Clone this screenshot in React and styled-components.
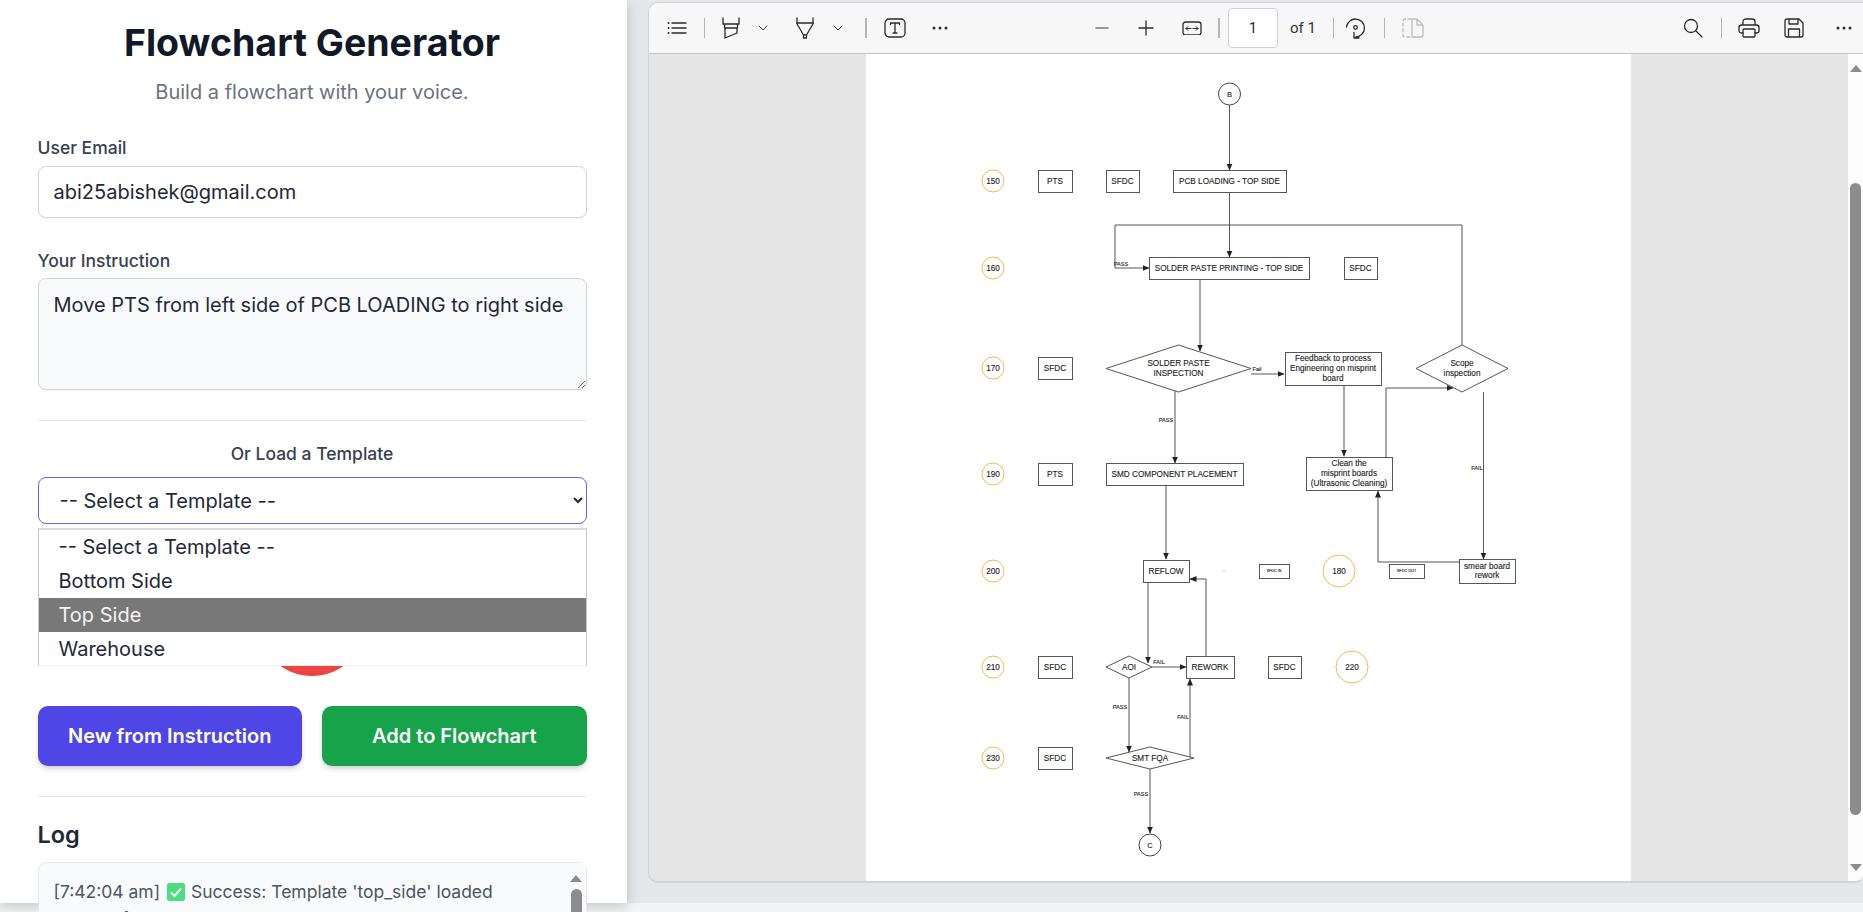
import React from 'react';
import styled, { createGlobalStyle } from 'styled-components';

const GlobalStyle = createGlobalStyle`
  html, body {
    margin: 0;
    height: 100%;
    overflow: hidden;
    background: #f3f4f6;
  }

  * {
    box-sizing: border-box;
  }
`;

const Page = styled.div`
  display: flex;
  align-items: flex-start;
  width: 1863px;
  height: 912px;
  overflow: hidden;
  font-family: Inter, 'Liberation Sans', sans-serif;
`;

const Sidebar = styled.aside`
  position: relative;
  z-index: 1;
  flex: 0 0 627px;
  height: 903px;
  padding: 23px 40.5px 0 37.5px;
  background: #fff;
  box-shadow: 0 4px 12px rgba(0, 0, 0, 0.18);
`;

const Title = styled.h1`
  margin: 0;
  font-size: 37.5px;
  line-height: 40px;
  font-weight: 700;
  text-align: center;
  color: #111827;
`;

const Subtitle = styled.p`
  margin: 15px 0 30px;
  font-size: 20px;
  line-height: 28px;
  text-align: center;
  color: #6b7280;
`;

const Label = styled.label`
  display: block;
  font-size: 17.5px;
  line-height: 24px;
  font-weight: 500;
  color: #374151;
  text-align: ${({ $center }) => ($center ? 'center' : 'left')};
`;

const EmailInput = styled.input`
  display: block;
  width: 100%;
  height: 52px;
  margin: 6px 0 31px;
  padding: 0 15px;
  border: 1px solid #d1d5db;
  border-radius: 8px;
  box-shadow: 0 1px 2px rgba(0, 0, 0, 0.05);
  background: #fff;
  font: 400 20px Inter, sans-serif;
  color: #1f2937;
`;

const InstructionInput = styled.textarea`
  display: block;
  width: 100%;
  height: 112px;
  margin: 5px 0 0;
  padding: 12px 15px;
  border: 1px solid #d1d5db;
  border-radius: 8px;
  box-shadow: 0 1px 2px rgba(0, 0, 0, 0.05);
  background: #f9fafb;
  font: 400 20px/28px Inter, sans-serif;
  color: #1f2937;
`;

const Divider = styled.hr`
  height: 1px;
  margin: ${({ $after }) => `${$after}px 0 0`};
  border: 0;
  background: #e5e7eb;
`;

const TemplateSection = styled.div`
  position: relative;
  margin-top: 21px;
`;

const TemplateSelect = styled.select`
  display: block;
  width: 100%;
  height: 47px;
  margin-top: 11px;
  padding: 0 13px 0 17px;
  border: 1.5px solid #6366f1;
  border-radius: 8px;
  background: #fff;
  font: 400 20px Inter, sans-serif;
  color: #1f2937;
`;

const OptionList = styled.ul`
  position: absolute;
  top: 86px;
  left: 0;
  right: 0;
  height: 138px;
  margin: 0;
  padding: 0;
  overflow: hidden;
  list-style: none;
  border: 1px solid #c8c8c8;
  border-top: 2px solid #dcdcdc;
  border-bottom: 1px solid #efefef;
  background: #fff;
`;

const Option = styled.li`
  height: 34px;
  padding-left: 20px;
  font-size: 20px;
  line-height: 34px;
  color: ${({ $active }) => ($active ? '#f3f4f6' : '#1f2937')};
  background: ${({ $active }) => ($active ? '#787878' : 'transparent')};
`;

const MicButton = styled.button`
  display: block;
  width: 108px;
  height: 108px;
  margin: 44px auto 30px;
  border: 0;
  border-radius: 50%;
  background: #ef4444;
`;

const Actions = styled.div`
  display: grid;
  grid-template-columns: 1fr 1fr;
  gap: 20px;
`;

const ActionButton = styled.button`
  height: 60px;
  border: 0;
  border-radius: 10px;
  background: ${({ $color }) => $color};
  box-shadow: 0 4px 6px -1px rgba(0, 0, 0, 0.15), 0 2px 4px -2px rgba(0, 0, 0, 0.12);
  font: 600 20px Inter, sans-serif;
  color: #fff;
`;

const LogTitle = styled.h2`
  margin: 23px 0 12px;
  font-size: 23.5px;
  line-height: 30px;
  font-weight: 600;
  color: #1f2937;
`;

const LogBox = styled.div`
  display: flex;
  height: 160px;
  border: 1px solid #e5e7eb;
  border-radius: 8px;
  background: #f9fafb;
`;

const LogText = styled.p`
  flex: 1;
  margin: 0;
  padding: 15px 15px;
  font-size: 17.5px;
  line-height: 27px;
  color: #4b5563;
`;

const CheckMark = styled.svg`
  display: inline-block;
  width: 18px;
  height: 18px;
  margin: 0 6px 0 2px;
  vertical-align: -3px;
`;

const ScrollTrack = styled.div`
  display: flex;
  flex: 0 0 ${({ $w }) => $w}px;
  flex-direction: column;
  align-items: center;
  background: ${({ $bg }) => $bg};
`;

const ScrollThumb = styled.div`
  flex: 0 0 ${({ $h }) => $h}px;
  width: 11px;
  margin-top: ${({ $top }) => $top}px;
  border-radius: 6px;
  background: #8c8c8c;
`;

const ArrowUp = styled.div`
  width: 0;
  height: 0;
  margin-top: ${({ $top }) => $top}px;
  border-left: 6px solid transparent;
  border-right: 6px solid transparent;
  border-bottom: 7px solid #8c8c8c;
`;

const ArrowDown = styled.div`
  width: 0;
  height: 0;
  margin-top: auto;
  margin-bottom: 10px;
  border-left: 6px solid transparent;
  border-right: 6px solid transparent;
  border-top: 7px solid #8c8c8c;
`;

const Main = styled.main`
  flex: 1;
  height: 903px;
  padding: 2px 0 20px 21px;
  background: #e5e7eb;
`;

const Viewer = styled.section`
  display: flex;
  flex-direction: column;
  height: 100%;
  overflow: hidden;
  border: 1px solid #cfd3d9;
  border-right: 0;
  border-bottom-width: 2px;
  border-radius: 10px 0 8px 10px;
  background: #e5e5e5;
`;

const Toolbar = styled.div`
  display: flex;
  flex: 0 0 51px;
  align-items: center;
  padding-left: 8px;
  border-bottom: 1px solid #c4c4c4;
  background: #f7f7f7;
`;

const Tool = styled.div`
  display: flex;
  flex: 0 0 ${({ $w }) => $w || 40}px;
  align-items: center;
  justify-content: center;
  margin-left: ${({ $ml }) => ($ml === 'auto' ? 'auto' : `${$ml || 0}px`)};
  color: ${({ $muted }) => ($muted ? '#bdbdbd' : '#2b2b2b')};
`;

const ToolSeparator = styled.div`
  flex: 0 0 ${({ $w }) => $w || 1}px;
  height: 20px;
  margin: 0 ${({ $mr, $m }) => $mr ?? $m ?? 6.5}px 0 ${({ $m }) => $m ?? 6.5}px;
  background: #b5b5b5;
`;

const PageNumber = styled.div`
  flex: 0 0 50px;
  height: 40px;
  margin-left: 2px;
  border: 1px solid #cfcfcf;
  border-radius: 4px;
  background: #fff;
  font: 400 14px/38px Roboto, sans-serif;
  text-align: center;
  color: #222;
`;

const PageCount = styled.span`
  margin: 0 8px 0 12px;
  font: 400 15px Roboto, sans-serif;
  color: #333;
`;

const ScrollArea = styled.div`
  display: flex;
  flex: 1;
  min-height: 0;
`;

const DocumentWell = styled.div`
  display: flex;
  flex: 1;
  justify-content: center;
`;

const Sheet = styled.div`
  flex: 0 0 765px;
  background: #fff;
`;

const IconSvg = styled.svg`
  display: block;
  fill: none;
  stroke: currentColor;
  stroke-width: 1.3;
  stroke-linecap: round;
  stroke-linejoin: round;
`;

const Icon = ({ w = 22, h = 22, children }) => (
  <IconSvg width={w} height={h} viewBox={`0 0 ${w} ${h}`}>
    {children}
  </IconSvg>
);

const ChartText = styled.text`
  font-family: 'Liberation Sans', Arial, sans-serif;
  font-size: ${({ $size }) => $size || 8.2}px;
  fill: #222;
  stroke: #222;
  stroke-width: 0.12;
  text-anchor: middle;
  dominant-baseline: central;
`;

const boxes = [
  [1038, 170, 34, 22, ['PTS']],
  [1106, 170, 33, 22, ['SFDC']],
  [1173, 170, 113, 22, ['PCB LOADING - TOP SIDE']],
  [1149, 257, 160, 22, ['SOLDER PASTE PRINTING - TOP SIDE']],
  [1344, 257, 33, 22, ['SFDC']],
  [1038, 357, 34, 22, ['SFDC']],
  [1285, 352, 96, 33, ['Feedback to process', 'Engineering on misprint', 'board']],
  [1038, 463, 34, 22, ['PTS']],
  [1106, 463, 137, 22, ['SMD COMPONENT PLACEMENT']],
  [1306, 457, 86, 33, ['Clean the', 'misprint boards', '(Ultrasonic Cleaning)']],
  [1143, 560, 46, 22, ['REFLOW']],
  [1259, 564, 30, 14, ['SFDC IN'], 3.8],
  [1389, 564, 35, 14, ['SFDC OUT'], 3.8],
  [1459, 559, 56, 24, ['smear board', 'rework']],
  [1038, 656, 34, 22, ['SFDC']],
  [1186, 656, 48, 22, ['REWORK']],
  [1268, 656, 33, 22, ['SFDC']],
  [1038, 747, 34, 22, ['SFDC']],
];

const diamonds = [
  [1106, 345, 145, 47, ['SOLDER PASTE', 'INSPECTION']],
  [1416, 345, 92, 47, ['Scope', 'inspection']],
  [1106, 656, 46, 22, ['AOI']],
  [1106, 747, 88, 22, ['SMT FQA']],
];

const rings = [
  [993, 181, 11, '150'],
  [993, 268, 11, '160'],
  [993, 368, 11, '170'],
  [993, 474, 11, '190'],
  [993, 571, 11, '200'],
  [993, 667, 11, '210'],
  [993, 758, 11, '230'],
  [1339, 571, 16, '180'],
  [1352, 667, 16, '220'],
];

const connectors = [
  '1229.5,105 1229.5,170',
  '1229.5,192 1229.5,257',
  '1462,345 1462,225 1115,225 1115,268 1149,268',
  '1200,279 1200,351',
  '1251,374 1284,374',
  '1344,385 1344,456',
  '1386,457 1386,388 1453,388',
  '1483.5,392 1483.5,559',
  '1175,389 1175,463',
  '1166,485 1166,559',
  '1459,562 1378,562 1378,491',
  '1148,582 1148,663',
  '1206,656 1206,579 1190,579',
  '1152,667 1186,667',
  '1129,678 1129,752',
  '1190,757 1190,679',
  '1150,769 1150,833',
];

const edgeLabels = [
  [1121, 264, 'PASS'],
  [1257, 369, 'Fail'],
  [1166, 420, 'PASS'],
  [1477, 468, 'FAIL'],
  [1159, 662, 'FAIL'],
  [1120, 707, 'PASS'],
  [1183, 717, 'FAIL'],
  [1141, 794, 'PASS'],
];

const Lines = ({ x, y, lines, size }) => {
  const step = 9.6;
  const top = y - ((lines.length - 1) * step) / 2;
  return lines.map((line, i) => (
    <ChartText key={line} x={x} y={top + i * step} $size={size}>
      {line}
    </ChartText>
  ));
};

const Flowchart = () => (
  <svg width="765" height="828" viewBox="866 54 765 828">
    <defs>
      <marker id="head" markerUnits="userSpaceOnUse" markerWidth="7" markerHeight="8" refX="6.5" refY="4" orient="auto">
        <path d="M0 1 L7 4 L0 7 Z" fill="#222" />
      </marker>
    </defs>
    {connectors.map(points => (
      <polyline key={points} points={points} fill="none" stroke="#555" strokeWidth="1" markerEnd="url(#head)" />
    ))}
    {boxes.map(([x, y, w, h, lines, size]) => (
      <g key={`${x}-${y}`}>
        <rect x={x + 0.5} y={y + 0.5} width={w} height={h} fill="#fff" stroke="#555" />
        <Lines x={x + w / 2} y={y + h / 2} lines={lines} size={size} />
      </g>
    ))}
    {diamonds.map(([x, y, w, h, lines]) => (
      <g key={`${x}-${y}`}>
        <polygon
          points={`${x},${y + h / 2} ${x + w / 2},${y} ${x + w},${y + h / 2} ${x + w / 2},${y + h}`}
          fill="#fff"
          stroke="#555"
        />
        <Lines x={x + w / 2} y={y + h / 2} lines={lines} />
      </g>
    ))}
    {rings.map(([x, y, r, label]) => (
      <g key={label}>
        <circle cx={x} cy={y} r={r} fill="#fff" stroke="#f7b84b" />
        <ChartText x={x} y={y}>{label}</ChartText>
      </g>
    ))}
    <circle cx="1229.5" cy="94" r="11" fill="#fff" stroke="#444" />
    <ChartText x="1229.5" y="94" $size={7.5}>B</ChartText>
    <circle cx="1150" cy="845" r="11" fill="#fff" stroke="#444" />
    <ChartText x="1150" y="845" $size={7.5}>C</ChartText>
    <rect x="1223.5" y="570.5" width="1" height="1" fill="#777" />
    {edgeLabels.map(([x, y, label]) => (
      <ChartText key={`${x}-${y}`} x={x} y={y} $size={5.6}>{label}</ChartText>
    ))}
  </svg>
);

const Dots = () => (
  <Icon w={18} h={6}>
    <circle cx="3" cy="3" r="1.5" fill="currentColor" stroke="none" />
    <circle cx="9" cy="3" r="1.5" fill="currentColor" stroke="none" />
    <circle cx="15" cy="3" r="1.5" fill="currentColor" stroke="none" />
  </Icon>
);

const Chevron = () => (
  <Icon w={10} h={6}>
    <path d="M1 1 L5 5 L9 1" strokeWidth="0.9" />
  </Icon>
);

const App = () => (
  <Page>
    <GlobalStyle />
    <Sidebar>
      <Title>Flowchart Generator</Title>
      <Subtitle>Build a flowchart with your voice.</Subtitle>
      <Label>User Email</Label>
      <EmailInput readOnly value="abi25abishek@gmail.com" />
      <Label>Your Instruction</Label>
      <InstructionInput readOnly value="Move PTS from left side of PCB LOADING to right side" />
      <Divider $after={30} />
      <TemplateSection>
        <Label $center>Or Load a Template</Label>
        <TemplateSelect defaultValue="">
          <option value="">-- Select a Template --</option>
          <option value="bottom_side">Bottom Side</option>
          <option value="top_side">Top Side</option>
          <option value="warehouse">Warehouse</option>
        </TemplateSelect>
        <OptionList>
          <Option>-- Select a Template --</Option>
          <Option>Bottom Side</Option>
          <Option $active>Top Side</Option>
          <Option>Warehouse</Option>
        </OptionList>
      </TemplateSection>
      <MicButton aria-label="Record" />
      <Actions>
        <ActionButton $color="#4f46e5">New from Instruction</ActionButton>
        <ActionButton $color="#16a34a">Add to Flowchart</ActionButton>
      </Actions>
      <Divider $after={30} />
      <LogTitle>Log</LogTitle>
      <LogBox>
        <LogText>
          [7:42:04 am]{' '}
          <CheckMark viewBox="0 0 18 18">
            <rect width="18" height="18" rx="2" fill="#4ade80" />
            <path d="M4 9.5 L7.5 13 L14 5.5" fill="none" stroke="#fff" strokeWidth="2" />
          </CheckMark>
          Success: Template 'top_side' loaded successfully.
        </LogText>
        <ScrollTrack $w={19} $bg="#f9fafb">
          <ArrowUp $top={12} />
          <ScrollThumb $h={100} $top={7} />
        </ScrollTrack>
      </LogBox>
    </Sidebar>
    <Main>
      <Viewer>
        <Toolbar>
          <Tool>
            <Icon w={20} h={14}>
              <circle cx="1.5" cy="2" r="1" fill="currentColor" stroke="none" />
              <circle cx="1.5" cy="7" r="1" fill="currentColor" stroke="none" />
              <circle cx="1.5" cy="12" r="1" fill="currentColor" stroke="none" />
              <path d="M5 2 H19 M5 7 H19 M5 12 H19" />
            </Icon>
          </Tool>
          <ToolSeparator />
          <Tool>
            <Icon w={20} h={22}>
              <path d="M2 1 V7 H18 V1 M3.5 7 V11 H16.5 V7 M4 11 V21 L16 16 V11" />
            </Icon>
          </Tool>
          <Tool $w={24}><Chevron /></Tool>
          <Tool $ml={10}>
            <Icon w={20} h={22}>
              <path d="M2 1 V6 H18 V1 M1.5 6 L8.5 18 V21 H11.5 V18 L18.5 6 M8.5 18 H11.5" />
            </Icon>
          </Tool>
          <Tool $w={24} $ml={1}><Chevron /></Tool>
          <ToolSeparator $w={1.5} $m={15} $mr={7} />
          <Tool $ml={1}>
            <Icon w={22} h={20}>
              <rect x="1" y="1" width="20" height="18" rx="4" />
              <path d="M6.5 6.5 V5 H15.5 V6.5 M11 5 V15 M9 15 H13" />
            </Icon>
          </Tool>
          <Tool $ml={5}><Dots /></Tool>
          <Tool $ml={122}>
            <Icon w={16} h={4}>
              <path d="M2 2 H14" strokeWidth="1.6" stroke="#777" />
            </Icon>
          </Tool>
          <Tool $ml={4}>
            <Icon w={16} h={16}>
              <path d="M1 8 H15 M8 1 V15" />
            </Icon>
          </Tool>
          <Tool $ml={6}>
            <Icon w={20} h={14}>
              <rect x="1" y="1" width="18" height="13" rx="2.5" />
              <path d="M4 7.5 H9 M4 7.5 L6 5.5 M4 7.5 L6 9.5 M11 7.5 H16 M16 7.5 L14 5.5 M16 7.5 L14 9.5" strokeWidth="1" />
            </Icon>
          </Tool>
          <ToolSeparator $w={1.5} $m={6.5} />
          <PageNumber>1</PageNumber>
          <PageCount>of 1</PageCount>
          <ToolSeparator $m={9} $mr={2} />
          <Tool>
            <Icon w={22} h={22}>
              <path d="M1.5 10 A 9 9 0 1 1 11 20 M9 15.5 V21 H14" />
              <circle cx="10.5" cy="10.5" r="1.8" />
            </Icon>
          </Tool>
          <ToolSeparator $w={1.5} $m={8} />
          <Tool $muted>
            <Icon w={22} h={20}>
              <path d="M9 1 H3 Q1 1 1 3 V17 Q1 19 3 19 H9" strokeDasharray="3 2.5" />
              <path d="M10 1 H15 L21 7 V17 Q21 19 19 19 H10 Z M15 1 V7 H21" />
            </Icon>
          </Tool>
          <Tool $ml="auto">
            <Icon w={20} h={20}>
              <circle cx="8" cy="8" r="6.5" />
              <path d="M13 13 L19 19" />
            </Icon>
          </Tool>
          <ToolSeparator $m={8} $mr={7} />
          <Tool>
            <Icon w={22} h={20}>
              <path d="M5 7 V3.5 Q5 1 8 1 H14 Q17 1 17 3.5 V7 M5 15 H3.5 Q1 15 1 12.5 V9.5 Q1 7 3.5 7 H18.5 Q21 7 21 9.5 V12.5 Q21 15 18.5 15 H17" />
              <rect x="5" y="11" width="12" height="8" rx="1" />
            </Icon>
          </Tool>
          <Tool $ml={5}>
            <Icon w={20} h={20}>
              <path d="M3 1 H15 L19 5 V17 Q19 19 17 19 H3 Q1 19 1 17 V3 Q1 1 3 1 Z M5 1 V6 H14 V1 M4.5 19 V11 H15.5 V19" />
            </Icon>
          </Tool>
          <Tool $ml={11} $w={38}><Dots /></Tool>
        </Toolbar>
        <ScrollArea>
          <DocumentWell>
            <Sheet><Flowchart /></Sheet>
          </DocumentWell>
          <ScrollTrack $w={15} $bg="#fdfdfd">
            <ArrowUp $top={11} />
            <ScrollThumb $h={632} $top={111} />
            <ArrowDown />
          </ScrollTrack>
        </ScrollArea>
      </Viewer>
    </Main>
  </Page>
);

export default App;
